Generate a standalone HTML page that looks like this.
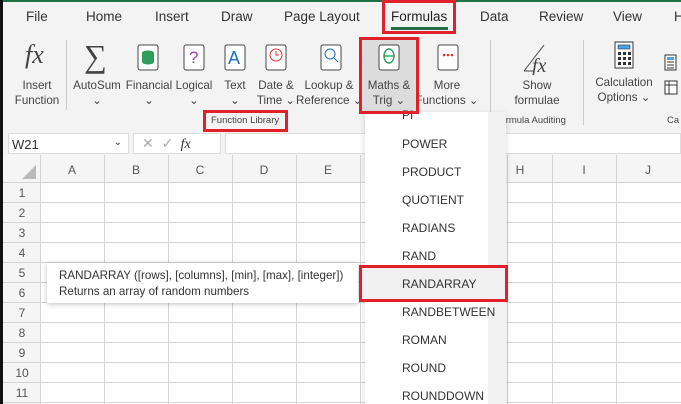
<!DOCTYPE html>
<html><head><meta charset="utf-8"><style>
*{box-sizing:border-box;margin:0;padding:0}
body{width:681px;height:404px;overflow:hidden;background:#fff;font-family:"Liberation Sans",sans-serif;color:#333;position:relative}
.a{position:absolute;white-space:nowrap}
.rib{position:absolute;left:0;top:0;width:681px;height:131px;background:#f3f3f3}
.tab{font-size:13.5px;color:#333;top:9px}
.lbl{font-size:11.6px;color:#444;text-align:center;line-height:15px}
.red{position:absolute;border:3px solid #e0202a}
.grid{position:absolute;left:3px;top:155px;width:678px;height:249px}
.mi{position:absolute;left:402px;font-size:12px;color:#333}
</style></head><body>
<div class="rib"></div>
<div class="a" style="left:0;top:0;width:681px;height:2px;background:#1e7145"></div>
<div class="a tab" style="left:26px">File</div>
<div class="a tab" style="left:86px">Home</div>
<div class="a tab" style="left:155px">Insert</div>
<div class="a tab" style="left:221px">Draw</div>
<div class="a tab" style="left:284px">Page Layout</div>
<div class="a tab" style="left:391px;color:#222">Formulas</div>
<div class="a" style="left:391px;top:27px;width:57px;height:3px;background:#1e7145"></div>
<div class="a tab" style="left:480px">Data</div>
<div class="a tab" style="left:539px">Review</div>
<div class="a tab" style="left:613px">View</div>
<div class="a tab" style="left:674px">H</div>

<div class="a" style="left:25px;top:40px;font:italic 26px 'Liberation Serif',serif;color:#444">fx</div>
<div class="a" style="left:66px;top:40px;width:1px;height:70px;background:#ccc"></div>
<div class="a" style="left:84px;top:38px;font:32px 'Liberation Serif',serif;color:#444">∑</div>
<svg class="a" style="left:137px;top:44px" width="22" height="28"><rect x="1" y="1" width="20" height="25" rx="2" fill="#fff" stroke="#444"/><ellipse cx="11" cy="9" rx="6" ry="2.5" fill="#2e9e5b"/><rect x="5" y="9" width="12" height="9" fill="#2e9e5b"/><ellipse cx="11" cy="18" rx="6" ry="2.5" fill="#2e9e5b"/></svg>
<svg class="a" style="left:183px;top:44px" width="22" height="28"><rect x="1" y="1" width="20" height="25" rx="2" fill="#fff" stroke="#444"/><text x="6" y="19" font-size="17" fill="#a23fb5" font-family="Liberation Sans">?</text></svg>
<svg class="a" style="left:224px;top:44px" width="22" height="28"><rect x="1" y="1" width="20" height="25" rx="2" fill="#fff" stroke="#444"/><text x="4" y="20" font-size="18" fill="#1b6fc8" font-family="Liberation Sans">A</text></svg>
<svg class="a" style="left:265px;top:44px" width="22" height="28"><rect x="1" y="1" width="20" height="25" rx="2" fill="#fff" stroke="#444"/><circle cx="11" cy="11" r="6" fill="none" stroke="#d33"/><path d="M11 7v4h3" stroke="#d33" fill="none"/></svg>
<svg class="a" style="left:320px;top:44px" width="22" height="28"><rect x="1" y="1" width="20" height="25" rx="2" fill="#fff" stroke="#444"/><circle cx="10" cy="10" r="5" fill="none" stroke="#1b6fc8"/><path d="M14 14l4 4" stroke="#1b6fc8"/></svg>
<div class="a" style="left:362px;top:40px;width:54px;height:72px;background:#dcdcdc"></div>
<svg class="a" style="left:378px;top:44px" width="22" height="28"><rect x="1" y="1" width="20" height="25" rx="2" fill="#fff" stroke="#444"/><ellipse cx="11" cy="12" rx="5" ry="7" fill="none" stroke="#2e9e5b" stroke-width="1.4"/><path d="M6 12h10" stroke="#2e9e5b" stroke-width="1.4"/></svg>
<svg class="a" style="left:437px;top:44px" width="22" height="28"><rect x="1" y="1" width="20" height="25" rx="2" fill="#fff" stroke="#444"/><circle cx="7" cy="11" r="1.3" fill="#d33"/><circle cx="11" cy="11" r="1.3" fill="#d33"/><circle cx="15" cy="11" r="1.3" fill="#d33"/></svg>
<div class="a" style="left:490px;top:40px;width:1px;height:85px;background:#ccc"></div>
<svg class="a" style="left:522px;top:43px" width="32" height="32"><path d="M2 28L22 2" stroke="#444" fill="none"/><path d="M2 28h10" stroke="#444"/><text x="10" y="29" font-size="20" font-style="italic" font-family="Liberation Serif" fill="#444">fx</text></svg>
<div class="a" style="left:583px;top:40px;width:1px;height:85px;background:#ccc"></div>
<svg class="a" style="left:614px;top:41px" width="20" height="28"><rect x="1" y="1" width="18" height="26" fill="#fff" stroke="#333"/><rect x="4" y="4" width="12" height="4" fill="#4aa3e8" stroke="#333" stroke-width=".6"/><g fill="#333"><rect x="4" y="11" width="3" height="3"/><rect x="9" y="11" width="3" height="3"/><rect x="14" y="11" width="3" height="3"/><rect x="4" y="16" width="3" height="3"/><rect x="9" y="16" width="3" height="3"/><rect x="14" y="16" width="3" height="3"/><rect x="4" y="21" width="3" height="3"/><rect x="9" y="21" width="3" height="3"/><rect x="14" y="21" width="3" height="3"/></g></svg>
<svg class="a" style="left:664px;top:54px" width="14" height="46"><rect x="1" y="1" width="11" height="15" fill="#fff" stroke="#333"/><rect x="3" y="3" width="7" height="3" fill="#4aa3e8"/><path d="M3 8h7M3 11h7M3 14h7" stroke="#333"/><rect x="1" y="27" width="12" height="13" fill="#fff" stroke="#333"/><path d="M1 31h12M5 27v13" stroke="#333"/></svg>

<div class="a lbl" style="left:10px;top:78px;width:54px">Insert<br>Function</div>
<div class="a lbl" style="left:70px;top:78px;width:54px">AutoSum<br>⌄</div>
<div class="a lbl" style="left:122px;top:78px;width:54px">Financial<br>⌄</div>
<div class="a lbl" style="left:167px;top:78px;width:54px">Logical<br>⌄</div>
<div class="a lbl" style="left:208px;top:78px;width:54px">Text<br>⌄</div>
<div class="a lbl" style="left:249px;top:78px;width:54px">Date &amp;<br>Time ⌄</div>
<div class="a lbl" style="left:296px;top:78px;width:66px">Lookup &amp;<br>Reference ⌄</div>
<div class="a lbl" style="left:362px;top:78px;width:54px">Maths &amp;<br>Trig ⌄</div>
<div class="a lbl" style="left:414px;top:78px;width:66px">More<br>Functions ⌄</div>
<div class="a lbl" style="left:505px;top:78px;width:64px">Show<br>formulae</div>
<div class="a lbl" style="left:588px;top:75px;width:72px">Calculation<br>Options ⌄</div>
<div class="a" style="left:211px;top:115px;font-size:9.5px;color:#444">Function Library</div>
<div class="a" style="left:493px;top:115px;font-size:9.5px;color:#444">▴ ormula Auditing</div>
<div class="a" style="left:667px;top:115px;font-size:9.5px;color:#444">Ca</div>

<div class="a" style="left:0;top:131px;width:681px;height:24px;background:#f3f3f3"></div>
<div class="a" style="left:8px;top:133px;width:121px;height:21px;background:#fff;border:1px solid #ddd;font-size:13px;padding:3px 3px">W21<span style="position:absolute;right:6px;top:3px;font-size:10px">⌄</span></div>
<div class="a" style="left:133px;top:133px;width:88px;height:21px;background:#fff;border:1px solid #ddd;font-size:14px;color:#aaa;padding:1px 8px">✕ &nbsp;✓ <i style="font-family:'Liberation Serif';color:#333;font-size:14px">&nbsp;fx</i></div>
<div class="a" style="left:225px;top:133px;width:456px;height:21px;background:#fff;border:1px solid #ddd"></div>

<svg class="grid" width="678" height="249">
<rect x="0" y="0" width="678" height="27" fill="#f5f5f5"/>
<rect x="0" y="0" width="37" height="249" fill="#f5f5f5"/>
<path d="M33 10L33 24L19 24Z" fill="#bbb"/>
<g stroke="#d4d4d4" stroke-width="1">
<path d="M37.5 0V249M101.5 0V249M165.5 0V249M229.5 0V249M293.5 0V249M357.5 0V249M504.5 0V249M549.5 0V249M613.5 0V249"/>
<path d="M0 27.5H678M0 47.5H678M0 67.5H678M0 87.5H678M0 107.5H678M0 127.5H678M0 147.5H678M0 167.5H678M0 187.5H678M0 207.5H678M0 227.5H678M0 247.5H678"/>
</g>
<g font-size="12" fill="#555" font-family="Liberation Sans" text-anchor="middle">
<text x="69" y="19">A</text><text x="133" y="19">B</text><text x="197" y="19">C</text><text x="261" y="19">D</text><text x="325" y="19">E</text><text x="517" y="19">H</text><text x="581" y="19">I</text><text x="645" y="19">J</text>
<text x="19" y="42">1</text><text x="19" y="62">2</text><text x="19" y="82">3</text><text x="19" y="102">4</text><text x="19" y="122">5</text><text x="19" y="142">6</text><text x="19" y="162">7</text><text x="19" y="182">8</text><text x="19" y="202">9</text><text x="19" y="222">10</text><text x="19" y="242">11</text>
</g>
</svg>
<div class="a" style="left:0;top:0;width:3px;height:404px;background:#111"></div>

<div class="a" style="left:365px;top:112px;width:141px;height:292px;background:#f2f2f2;box-shadow:0 2px 6px rgba(0,0,0,.15)"></div>
<div class="a" style="left:365px;top:112px;width:123px;height:292px;background:#fff"></div>
<div class="a" style="left:362px;top:268px;width:143px;height:31px;background:#f0f0f0"></div>
<div class="mi" style="top:108px">PI</div>
<div class="mi" style="top:137px">POWER</div>
<div class="mi" style="top:165px">PRODUCT</div>
<div class="mi" style="top:193px">QUOTIENT</div>
<div class="mi" style="top:221px">RADIANS</div>
<div class="mi" style="top:249px">RAND</div>
<div class="mi" style="top:277px">RANDARRAY</div>
<div class="mi" style="top:305px">RANDBETWEEN</div>
<div class="mi" style="top:333px">ROMAN</div>
<div class="mi" style="top:361px">ROUND</div>
<div class="mi" style="top:389px">ROUNDDOWN</div>

<div class="a" style="left:47px;top:263px;width:311px;height:40px;background:#fff;box-shadow:0 1px 5px rgba(0,0,0,.25);font-size:11.6px;color:#333;padding:5px 12px;line-height:16px">RANDARRAY ([rows], [columns], [min], [max], [integer])<br>Returns an array of random numbers</div>

<div class="red" style="left:382px;top:0;width:74px;height:34px"></div>
<div class="red" style="left:359px;top:37px;width:60px;height:77px"></div>
<div class="red" style="left:203px;top:110px;width:85px;height:22px"></div>
<div class="red" style="left:359px;top:265px;width:149px;height:37px"></div>
</body></html>
